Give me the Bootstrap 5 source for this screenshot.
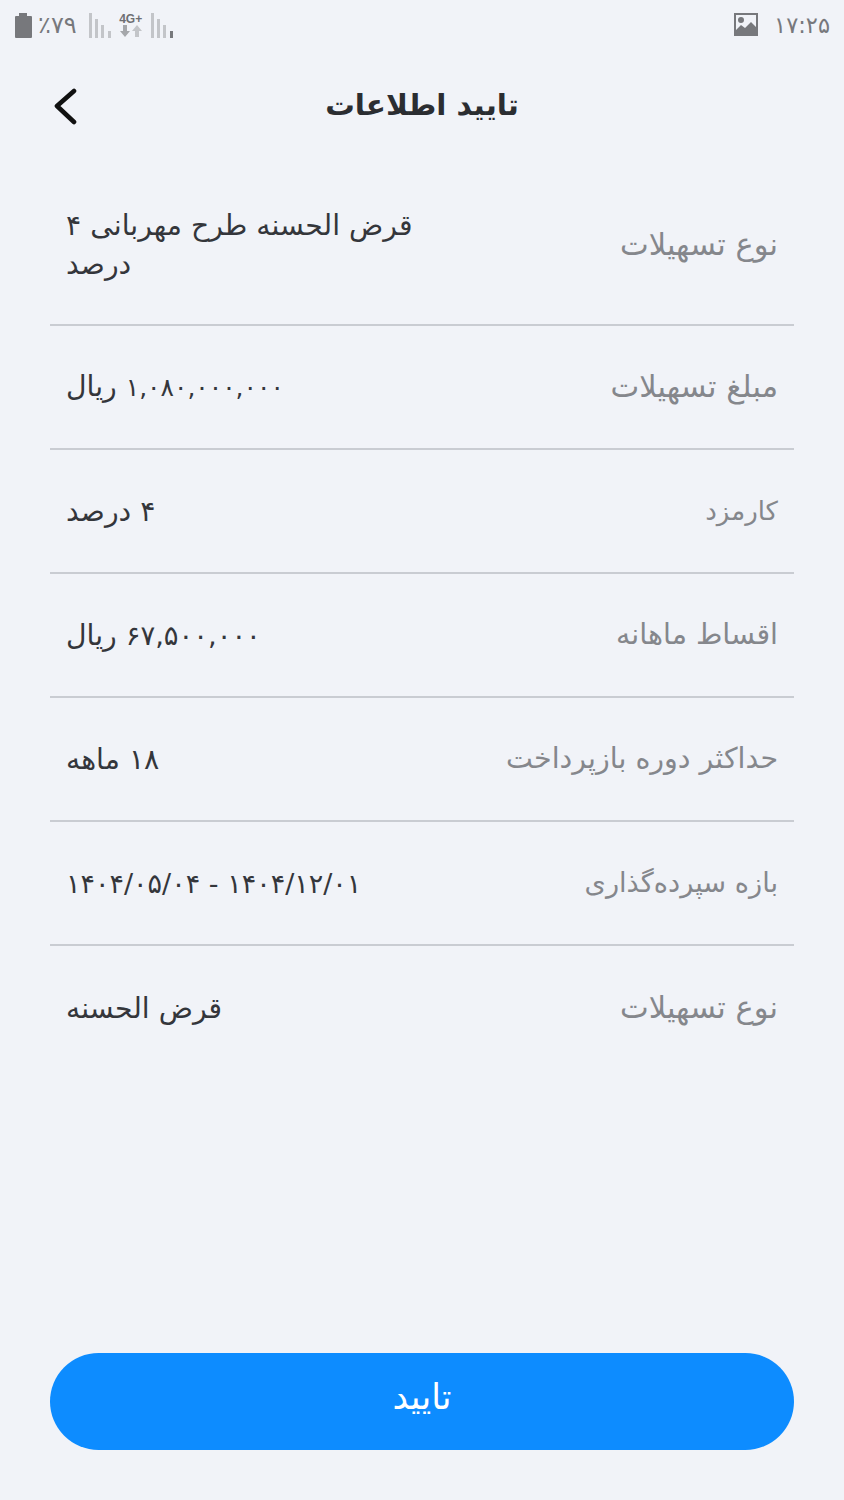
<!DOCTYPE html>
<html lang="fa" dir="rtl">
<head>
<meta charset="utf-8">
<title>تایید اطلاعات</title>
<link href="https://cdn.jsdelivr.net/npm/bootstrap@5.3.0/dist/css/bootstrap.min.css" rel="stylesheet">
<style>
html,body{background:#f1f3f8;font-family:"DejaVu Sans","Noto Sans",sans-serif;}
.screen{height:1500px;background:#f1f3f8;}
.statusbar{height:50px;padding:8px 14px 0 14px;color:#77787c;}
.clock{font-size:22.5px;line-height:34px;}
.pct{font-size:24px;line-height:34px;}
.netlabel{font:700 12px/11px "Liberation Sans",sans-serif;color:#6e6f73;}
.topbar{height:116px;padding:0 50px 5px;}
.topbar-title{font-size:29.5px;font-weight:700;color:#2b2d31;margin:0;line-height:1.2;}
.backbtn{left:52px;top:35px;width:28px;height:40px;}
.info-list{padding:0 50px;--bs-list-group-bg:transparent;}
.info-list .info-row{background:transparent;border-width:0 0 2px;border-style:solid;border-color:#c9ccd2;padding:0 16px;height:124px;border-radius:0;}
.info-list .info-row:first-child{height:160px;}
.info-list .info-row:last-child{border-bottom:0;}
.label-txt{font-size:28.5px;color:#85878c;white-space:nowrap;}
.label-wide{font-size:30.5px;}
.label-mid{font-size:27.2px;}
.label-narrow{font-size:26px;}
.value-txt{font-size:28.3px;color:#34363b;text-align:left;line-height:39px;max-width:352px;}
.tight-num{font-size:25px;}
.tight-num2{font-size:27.4px;}
.date-val{font-size:27px;}
.confirm-wrap{padding:0 50px 50px;}
.confirm-btn{height:97px;border-radius:49px;background:#0d8cff;border:0;color:#fff;font-size:35px;padding-bottom:14px;}
</style>
</head>
<body>
<div class="screen d-flex flex-column">
  <div class="statusbar d-flex justify-content-between align-items-start" dir="ltr">
    <div class="d-flex align-items-center gap-1">
      <svg width="20" height="26" viewBox="0 0 20 26"><path fill="#77787c" d="M5 1h8v3h4a1 1 0 0 1 1 1v20a1 1 0 0 1-1 1H2a1 1 0 0 1-1-1V5a1 1 0 0 1 1-1h3z"/></svg>
      <span class="pct">٪۷۹</span>
      <svg class="ms-2" width="26" height="26" viewBox="0 0 26 26" fill="#c3c5c9"><rect x="0" y="1" width="3" height="25"/><rect x="6" y="7" width="3" height="19"/><rect x="12" y="13" width="3" height="13"/><rect x="19" y="19" width="3" height="7"/></svg>
      <div class="d-flex flex-column align-items-center">
        <span class="netlabel">4G+</span>
        <svg width="24" height="12" viewBox="0 0 24 12"><path fill="#a5a7ab" d="M4 0h4v6h3l-5 6-5-6h3z"/><path fill="#c3c5c9" d="M16 12h4V6h3l-5-6-5 6h3z"/></svg>
      </div>
      <svg class="ms-1" width="26" height="26" viewBox="0 0 26 26" fill="#c3c5c9"><rect x="0" y="1" width="3" height="25"/><rect x="6" y="7" width="3" height="19"/><rect x="12" y="13" width="3" height="13"/><rect x="19" y="19" width="3" height="7" fill="#77787c"/></svg>
    </div>
    <div class="d-flex align-items-center gap-3">
      <svg width="24" height="24" viewBox="0 0 24 24"><path fill="#77787c" fill-rule="evenodd" d="M0 0h24v23H0zM2 2v15l5-5 4 3 6-6 5 5V2zM7 4a3 3 0 1 1 0 6 3 3 0 0 1 0-6z"/></svg>
      <span class="clock">۱۷:۲۵</span>
    </div>
  </div>
  <div class="topbar position-relative d-flex align-items-center justify-content-center">
    <h1 class="topbar-title">تایید اطلاعات</h1>
    <svg class="backbtn position-absolute" viewBox="0 0 28 40" fill="none" stroke="#111" stroke-width="4.6" stroke-linecap="round" stroke-linejoin="round"><path d="M22 6 5 21l17 16"/></svg>
  </div>
  <ul class="list-group list-group-flush info-list">
    <li class="list-group-item info-row d-flex justify-content-between align-items-center"><span class="label-txt label-wide">نوع تسهیلات</span><span class="value-txt">قرض الحسنه طرح مهربانی ۴ درصد</span></li>
    <li class="list-group-item info-row d-flex justify-content-between align-items-center"><span class="label-txt label-wide">مبلغ تسهیلات</span><span class="value-txt"><span class="tight-num">۱,۰۸۰,۰۰۰,۰۰۰</span> ریال</span></li>
    <li class="list-group-item info-row d-flex justify-content-between align-items-center"><span class="label-txt label-narrow">کارمزد</span><span class="value-txt">۴ درصد</span></li>
    <li class="list-group-item info-row d-flex justify-content-between align-items-center"><span class="label-txt">اقساط ماهانه</span><span class="value-txt"><span class="tight-num2">۶۷,۵۰۰,۰۰۰</span> ریال</span></li>
    <li class="list-group-item info-row d-flex justify-content-between align-items-center"><span class="label-txt">حداکثر دوره بازپرداخت</span><span class="value-txt">۱۸ ماهه</span></li>
    <li class="list-group-item info-row d-flex justify-content-between align-items-center"><span class="label-txt label-mid">بازه سپرده‌گذاری</span><span class="value-txt date-val">۱۴۰۴/۱۲/۰۱ - ۱۴۰۴/۰۵/۰۴</span></li>
    <li class="list-group-item info-row d-flex justify-content-between align-items-center"><span class="label-txt label-wide">نوع تسهیلات</span><span class="value-txt">قرض الحسنه</span></li>
  </ul>
  <div class="confirm-wrap mt-auto">
    <button type="button" class="btn btn-primary confirm-btn w-100">تایید</button>
  </div>
</div>
<script src="https://cdn.jsdelivr.net/npm/bootstrap@5.3.0/dist/js/bootstrap.bundle.min.js"></script>
</body>
</html>
